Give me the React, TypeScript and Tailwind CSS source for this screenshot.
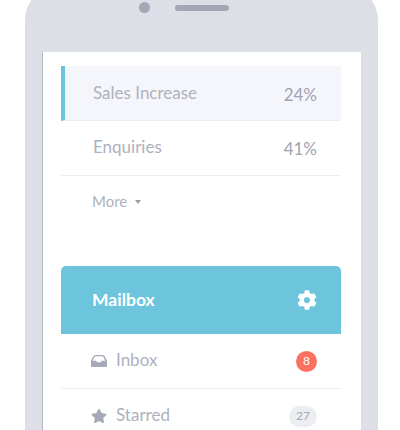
import { FaCog, FaStar } from 'react-icons/fa';

function InboxIcon() {
  return (
    <svg width="16" height="12" viewBox="0 0 16 12" className="text-[#a6a9b7]" fill="currentColor">
      <path
        d="M4.500 0h7c.9 0 1.500.4 2 1.100L16 5.500V11c0 .6-.4 1-1 1H1c-.6 0-1-.4-1-1V5.500l2.500-4.400C3 .4 3.600 0 4.500 0zM4.600 1.300c-.4 0-.7.2-.9.5L1.600 5.700h3.500l1 1.500h3.800l1-1.500h3.500l-2.100-3.900c-.2-.3-.5-.5-.9-.5z"
        fillRule="evenodd"
      />
    </svg>
  );
}

function StatRow({ label, value, active }: { label: string; value: string; active?: boolean }) {
  return (
    <div
      className={`flex h-[55px] border-b border-[#ebedf1] pr-6 ${
        active ? 'border-l-4 border-l-[#6cc5dd] bg-[#f5f6fb] pl-7' : 'pl-8'
      }`}
    >
      <span className={`${active ? 'mt-[15px]' : 'mt-[14px]'} text-[17px] leading-6 text-[#aeb1bd]`}>{label}</span>
      <span className={`${active ? 'mt-[17px]' : 'mt-[16px]'} ml-auto text-[17px] leading-6 text-[#a0a3b0]`}>{value}</span>
    </div>
  );
}

function MailRow({ icon, label, badge }: { icon: React.ReactNode; label: string; badge: React.ReactNode }) {
  return (
    <div className="flex h-[55px] items-center border-b border-[#ebedf1] pr-6 pl-[30px]">
      <span className="flex w-[16px] justify-center">{icon}</span>
      <span className="ml-[9px] pb-[2px] text-[17px] leading-6 text-[#aeb1bd]">{label}</span>
      <span className="ml-auto">{badge}</span>
    </div>
  );
}

export default function App() {
  return (
    <div className="h-[430px] w-[400px] overflow-hidden bg-white pl-[25px] font-['Lato',sans-serif]">
      <div className="-mt-[14px] h-[480px] w-[353px] rounded-t-[34px] bg-[#dcdfe6]">
        <div className="flex h-[66px] items-start justify-center pt-[16px] pr-[35px]">
          <span className="h-[11px] w-[11px] rounded-full bg-[#a3a6b5]" />
          <span className="mt-[3px] ml-[25px] h-[6px] w-[54px] rounded-full bg-[#a3a6b5]" />
        </div>
        <div className="ml-[17px] h-[414px] w-[319px] border-l border-[#b5b8c2] bg-white pt-[14px] pr-[20px] pl-[18px]">
          <StatRow label="Sales Increase" value="24%" active />
          <StatRow label="Enquiries" value="41%" />
          <div className="flex h-[51px] items-center pl-[31px] text-[15px] text-[#aeb1bd]">
            More
            <span className="mt-[1px] ml-2 h-0 w-0 border-x-[3px] border-t-[4px] border-x-transparent border-t-[#9a9dab]" />
          </div>
          <div className="mt-[39px] flex h-[68px] items-center justify-between rounded-t-[5px] bg-[#6cc5dd] pr-6 pl-[31px] text-white">
            <span className="text-[17.5px] font-bold">Mailbox</span>
            <FaCog size={20} />
          </div>
          <MailRow
            icon={<InboxIcon />}
            label="Inbox"
            badge={
              <span className="flex h-[21px] w-[21px] items-center justify-center rounded-full bg-[#fb7060] text-xs text-white">
                8
              </span>
            }
          />
          <MailRow
            icon={<FaStar size={16} className="text-[#a6a9b7]" />}
            label="Starred"
            badge={
              <span className="flex h-[21px] w-[28px] items-center justify-center rounded-full bg-[#eceef2] text-xs text-[#a6a9b7]">
                27
              </span>
            }
          />
        </div>
      </div>
    </div>
  );
}
